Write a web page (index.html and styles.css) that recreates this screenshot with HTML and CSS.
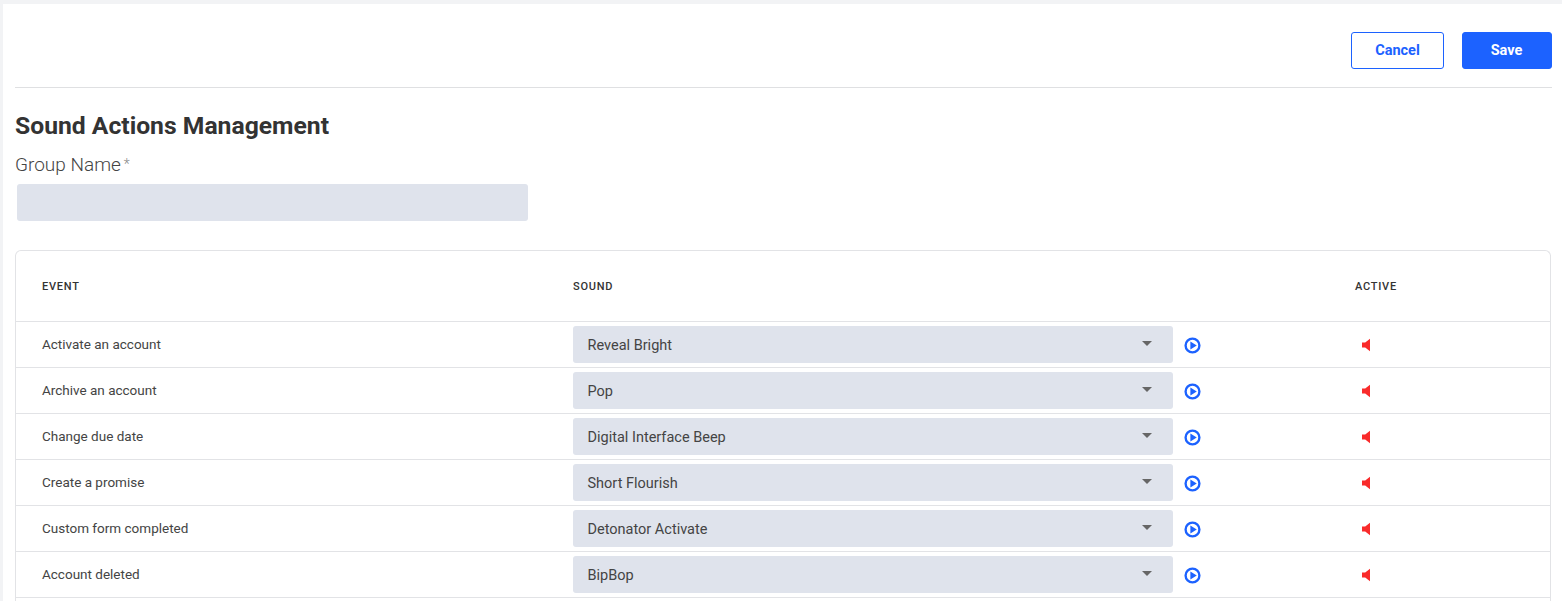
FILE: index.html
```html
<!DOCTYPE html>
<html lang="en">
<head>
<meta charset="utf-8">
<title>Sound Actions Management</title>
<link rel="stylesheet" href="styles.css">
</head>
<body>
<main class="panel">
  <header class="toolbar">
    <button class="btn btn-outline" type="button">Cancel</button>
    <button class="btn btn-solid" type="button">Save</button>
  </header>
  <h1 class="title">Sound Actions Management</h1>
  <label class="field-label" for="group">Group Name<span class="req">*</span></label>
  <input class="field-input" id="group" type="text">
  <section class="table">
    <div class="row head"><div>EVENT</div><div>SOUND</div><div>ACTIVE</div></div>
    <div class="row"><div class="event">Activate an account</div><div class="sound"><div class="select"><span>Reveal Bright</span><i class="caret"></i></div><svg class="play" viewBox="0 0 16 16"><circle cx="8" cy="8" r="6.5"/><path d="M6 4.2v7.6L12 8z"/></svg></div><div><svg class="mute" viewBox="0 0 10 14"><path d="M1 4.5h3.2L9 .8v12.4L4.2 9.5H1z"/></svg></div></div>
    <div class="row"><div class="event">Archive an account</div><div class="sound"><div class="select"><span>Pop</span><i class="caret"></i></div><svg class="play" viewBox="0 0 16 16"><circle cx="8" cy="8" r="6.5"/><path d="M6 4.2v7.6L12 8z"/></svg></div><div><svg class="mute" viewBox="0 0 10 14"><path d="M1 4.5h3.2L9 .8v12.4L4.2 9.5H1z"/></svg></div></div>
    <div class="row"><div class="event">Change due date</div><div class="sound"><div class="select"><span>Digital Interface Beep</span><i class="caret"></i></div><svg class="play" viewBox="0 0 16 16"><circle cx="8" cy="8" r="6.5"/><path d="M6 4.2v7.6L12 8z"/></svg></div><div><svg class="mute" viewBox="0 0 10 14"><path d="M1 4.5h3.2L9 .8v12.4L4.2 9.5H1z"/></svg></div></div>
    <div class="row"><div class="event">Create a promise</div><div class="sound"><div class="select"><span>Short Flourish</span><i class="caret"></i></div><svg class="play" viewBox="0 0 16 16"><circle cx="8" cy="8" r="6.5"/><path d="M6 4.2v7.6L12 8z"/></svg></div><div><svg class="mute" viewBox="0 0 10 14"><path d="M1 4.5h3.2L9 .8v12.4L4.2 9.5H1z"/></svg></div></div>
    <div class="row"><div class="event">Custom form completed</div><div class="sound"><div class="select"><span>Detonator Activate</span><i class="caret"></i></div><svg class="play" viewBox="0 0 16 16"><circle cx="8" cy="8" r="6.5"/><path d="M6 4.2v7.6L12 8z"/></svg></div><div><svg class="mute" viewBox="0 0 10 14"><path d="M1 4.5h3.2L9 .8v12.4L4.2 9.5H1z"/></svg></div></div>
    <div class="row"><div class="event">Account deleted</div><div class="sound"><div class="select"><span>BipBop</span><i class="caret"></i></div><svg class="play" viewBox="0 0 16 16"><circle cx="8" cy="8" r="6.5"/><path d="M6 4.2v7.6L12 8z"/></svg></div><div><svg class="mute" viewBox="0 0 10 14"><path d="M1 4.5h3.2L9 .8v12.4L4.2 9.5H1z"/></svg></div></div>
  </section>
</main>
</body>
</html>
```
FILE: styles.css
```css
* { box-sizing: border-box; }
html, body { margin: 0; height: 601px; overflow: hidden; }
body {
  background: #f2f3f5;
  padding: 4px 0 0 3px;
  font-family: Roboto, "Liberation Sans", sans-serif;
  color: #333;
}
.panel {
  display: flex;
  flex-direction: column;
  align-items: flex-start;
  background: #fff;
  height: 597px;
  padding: 0 10px 0 12px;
}
.toolbar {
  display: flex;
  justify-content: flex-end;
  align-self: stretch;
  gap: 18px;
  padding-top: 28px;
  height: 84px;
  border-bottom: 1px solid #dfe0e2;
}
.btn {
  height: 37px;
  border-radius: 3px;
  font: 700 14.5px/33px Roboto, sans-serif;
  padding: 0;
  cursor: pointer;
}
.btn-outline { width: 93px; background: #fff; border: 1px solid #1c62ff; color: #1c62ff; }
.btn-solid { width: 90px; background: #1c62ff; border: 1px solid #1c62ff; color: #fff; padding-right: 1px; }
.title { margin: 23px 0 0; font-size: 24.7px; font-weight: 700; line-height: 30px; color: #333; }
.field-label { display: block; margin-top: 11px; font-size: 19px; font-weight: 300; line-height: 24px; color: #444; }
.req { margin-left: 3px; font-size: 14px; color: #888; vertical-align: 2px; }
.field-input {
  display: block;
  width: 511px;
  height: 37px;
  margin: 7px 0 0 2px;
  border: 0;
  border-radius: 3px;
  background: #dfe3ec;
}
.table {
  flex: 1;
  margin-top: 29px;
  border: 1px solid #e2e3e6;
  border-bottom: 0;
  border-radius: 6px 6px 0 0;
  width: 1536px;
}
.row {
  display: grid;
  grid-template-columns: 557px 782px 1fr;
  align-items: center;
  height: 46px;
  border-bottom: 1px solid #e2e3e6;
}
.row > :first-child { padding-left: 26px; }
.head { height: 71px; font-size: 11px; font-weight: 500; letter-spacing: .75px; color: #333; }
.event { font-size: 13.5px; color: #444; padding-bottom: 2px; }
.sound { display: flex; align-items: center; }
.select {
  width: 600px;
  height: 37px;
  padding: 1px 21px 0 14.5px;
  display: flex;
  align-items: center;
  justify-content: space-between;
  border-radius: 3px;
  background: #dfe3ec;
  font-size: 14.5px;
  color: #444;
}
.caret {
  width: 0;
  height: 0;
  border-left: 5px solid transparent;
  border-right: 5px solid transparent;
  border-top: 5px solid #666;
  margin-bottom: 3px;
}
.play { width: 17px; height: 17px; margin: 2px 0 0 10.5px; flex: none; }
.play circle { fill: none; stroke: #1c62ff; stroke-width: 2.2; }
.play path { fill: #1c62ff; }
.mute { display: block; width: 10px; height: 14px; margin: 0 0 0 6px; fill: #f92b2b; }
```
